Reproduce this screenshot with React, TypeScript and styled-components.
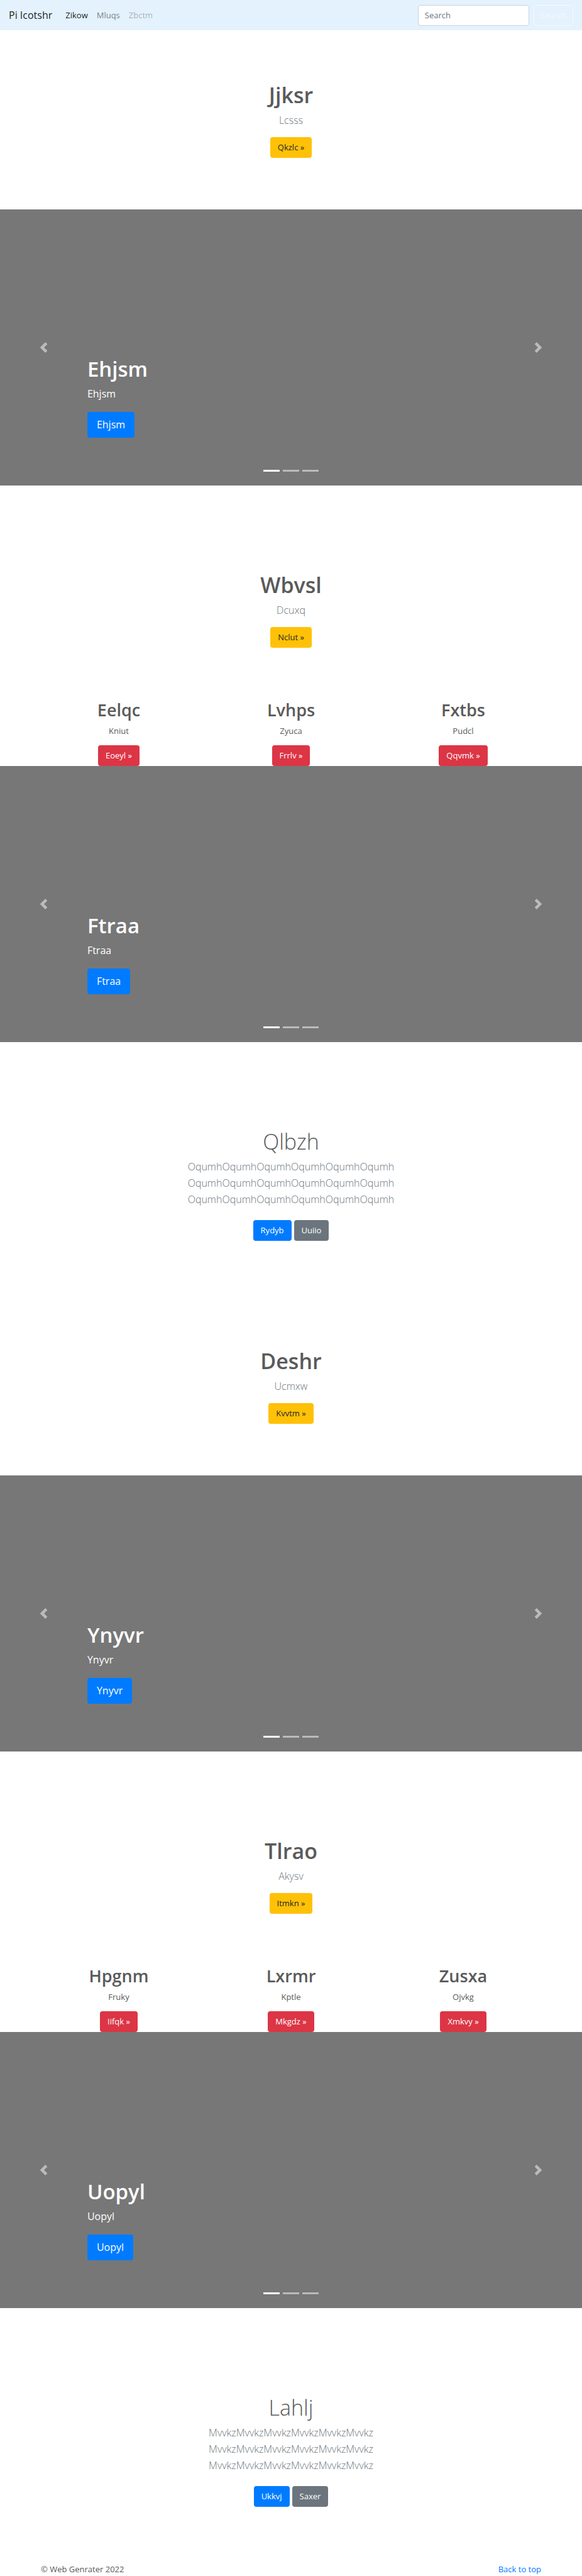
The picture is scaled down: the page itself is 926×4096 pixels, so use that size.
import React from 'react';
import styled, { createGlobalStyle } from 'styled-components';

const GlobalStyle = createGlobalStyle`
  *, *::before, *::after { box-sizing: border-box; }
  body {
    margin: 0;
    background: #fff;
    color: #5a5a5a;
    font-family: "Open Sans", "Noto Sans", sans-serif;
    font-size: 13px;
    line-height: 20px;
  }
  h1, h2, p, ul { margin: 0; padding: 0; }
  a { text-decoration: none; }
  button, input { font: inherit; }
`;

const Nav = styled.nav`
  display: flex;
  align-items: center;
  height: 48px;
  padding: 0 14px;
  background: #e3f2fd;
`;

const Brand = styled.a`
  margin-right: 14px;
  color: rgba(0, 0, 0, 0.9);
  font-size: 16px;
  line-height: 26px;
`;

const NavList = styled.ul`
  display: flex;
  flex: 1;
  list-style: none;
`;

const NavLink = styled.a<{ $alpha: number }>`
  display: block;
  padding: 0 7px;
  color: rgba(0, 0, 0, ${(p) => p.$alpha});
`;

const SearchForm = styled.form`
  display: flex;
  gap: 7px;
`;

const SearchInput = styled.input`
  width: 177px;
  height: 33px;
  padding: 0 10px;
  border: 1px solid #ced4da;
  border-radius: 4px;
  background: #fff;
  color: #495057;
  &::placeholder { color: #6c757d; opacity: 1; }
`;

const SearchButton = styled.button`
  height: 33px;
  padding: 0 10px;
  border: 1px solid #f8f9fa;
  border-radius: 4px;
  background: transparent;
  color: #f8f9fa;
`;

const tones = {
  warning: ['#ffc107', '#212529'],
  danger: ['#dc3545', '#fff'],
  primary: ['#007bff', '#fff'],
  secondary: ['#6c757d', '#fff'],
};

const ButtonLink = styled.a<{ $tone: keyof typeof tones; $large?: boolean }>`
  display: inline-block;
  height: ${(p) => (p.$large ? 41 : 33)}px;
  padding: 0 ${(p) => (p.$large ? 15 : 12)}px;
  border-radius: 4px;
  background: ${(p) => tones[p.$tone][0]};
  color: ${(p) => tones[p.$tone][1]};
  font-size: ${(p) => (p.$large ? 16 : 13)}px;
  line-height: ${(p) => (p.$large ? 41 : 33)}px;
`;

const Hero = styled.section`
  display: flex;
  flex-direction: column;
  align-items: center;
  padding: 82px 13px;
  text-align: center;
`;

const Title = styled.h1<{ $light?: boolean }>`
  margin-bottom: 5px;
  font-size: 34px;
  line-height: 43px;
  font-weight: ${(p) => (p.$light ? 300 : 600)};
`;

const SlideTitle = styled(Title)`
  font-size: 33px;
`;

const Lead = styled.p`
  margin-bottom: 14px;
  color: #6c757d;
  font-size: 16px;
  line-height: 26px;
  font-weight: 300;
`;

const Actions = styled.div`
  display: flex;
  gap: 4px;
  margin: 6px 0;
`;

const Columns = styled.section`
  display: grid;
  grid-template-columns: repeat(3, 1fr);
  max-width: 822px;
  margin: 0 auto;
`;

const Column = styled.div`
  display: flex;
  flex-direction: column;
  align-items: center;
  text-align: center;
`;

const ColumnTitle = styled.h2`
  margin-bottom: 7px;
  font-size: 27px;
  line-height: 33px;
  font-weight: 600;
`;

const ColumnText = styled.p`
  margin-bottom: 13px;
`;

const Slider = styled.section`
  position: relative;
  display: flex;
  flex-direction: column;
  justify-content: flex-end;
  height: 439px;
  margin-bottom: 55px;
  padding: 0 15% 76px;
  background: #777;
  color: #fff;
`;

const SlideText = styled.p`
  margin-bottom: 16px;
  font-size: 16px;
  line-height: 26px;
`;

const Arrow = styled.button<{ $side: 'left' | 'right' }>`
  position: absolute;
  top: 0;
  bottom: 0;
  ${(p) => p.$side}: 0;
  display: flex;
  align-items: center;
  justify-content: center;
  width: 15%;
  padding: 0;
  border: 0;
  background: none;
  opacity: 0.5;
`;

const Dots = styled.div`
  position: absolute;
  left: 0;
  right: 0;
  bottom: 22px;
  display: flex;
  justify-content: center;
  gap: 5px;
`;

const Dot = styled.button<{ $active: boolean }>`
  width: 26px;
  height: 3px;
  padding: 0;
  border: 0;
  background: #fff;
  opacity: ${(p) => (p.$active ? 1 : 0.5)};
`;

const Footer = styled.footer`
  display: flex;
  justify-content: space-between;
  max-width: 822px;
  margin: 0 auto;
  padding: 0 13px;
  line-height: 22px;
`;

const FooterLink = styled.a`
  color: #007bff;
`;

function Chevron({ d }: { d: string }) {
  return (
    <svg width="17" height="17" viewBox="0 0 8 8" fill="#fff" aria-hidden="true">
      <path d={d} />
    </svg>
  );
}

function Intro({ title, text, action }: { title: string; text: string; action: string }) {
  return (
    <Hero>
      <Title>{title}</Title>
      <Lead>{text}</Lead>
      <ButtonLink href="#" $tone="warning">{action} »</ButtonLink>
    </Hero>
  );
}

function Carousel({ label }: { label: string }) {
  return (
    <Slider>
      <SlideTitle>{label}</SlideTitle>
      <SlideText>{label}</SlideText>
      <div>
        <ButtonLink href="#" $tone="primary" $large>{label}</ButtonLink>
      </div>
      <Arrow type="button" aria-label="Previous" $side="left">
        <Chevron d="M5.25 0l-4 4 4 4 1.5-1.5L4.25 4l2.5-2.5L5.25 0z" />
      </Arrow>
      <Arrow type="button" aria-label="Next" $side="right">
        <Chevron d="M2.75 0l-1.5 1.5L3.75 4l-2.5 2.5L2.75 8l4-4-4-4z" />
      </Arrow>
      <Dots>
        {[0, 1, 2].map((i) => (
          <Dot key={i} type="button" aria-label={`Slide ${i + 1}`} $active={i === 0} />
        ))}
      </Dots>
    </Slider>
  );
}

function Features({ items }: { items: string[][] }) {
  return (
    <Columns>
      {items.map(([title, text, action]) => (
        <Column key={title}>
          <ColumnTitle>{title}</ColumnTitle>
          <ColumnText>{text}</ColumnText>
          <ButtonLink href="#" $tone="danger">{action} »</ButtonLink>
        </Column>
      ))}
    </Columns>
  );
}

function Album({ title, word, actions }: { title: string; word: string; actions: [string, string] }) {
  const line = word.repeat(6);
  return (
    <Hero>
      <Title $light>{title}</Title>
      <Lead>
        {line}<br />{line}<br />{line}
      </Lead>
      <Actions>
        <ButtonLink href="#" $tone="primary">{actions[0]}</ButtonLink>
        <ButtonLink href="#" $tone="secondary">{actions[1]}</ButtonLink>
      </Actions>
    </Hero>
  );
}

export default function App() {
  return (
    <>
      <GlobalStyle />
      <Nav>
        <Brand href="#">Pi Icotshr</Brand>
        <NavList>
          <li><NavLink href="#" $alpha={0.9}>Zikow</NavLink></li>
          <li><NavLink href="#" $alpha={0.5}>Mluqs</NavLink></li>
          <li><NavLink href="#" $alpha={0.3}>Zbctm</NavLink></li>
        </NavList>
        <SearchForm onSubmit={(e) => e.preventDefault()}>
          <SearchInput type="search" placeholder="Search" aria-label="Search" />
          <SearchButton type="submit">Search</SearchButton>
        </SearchForm>
      </Nav>
      <main>
        <Intro title="Jjksr" text="Lcsss" action="Qkzlc" />
        <Carousel label="Ehjsm" />
        <Intro title="Wbvsl" text="Dcuxq" action="Nclut" />
        <Features
          items={[
            ['Eelqc', 'Kniut', 'Eoeyl'],
            ['Lvhps', 'Zyuca', 'Frrlv'],
            ['Fxtbs', 'Pudcl', 'Qqvmk'],
          ]}
        />
        <Carousel label="Ftraa" />
        <Album title="Qlbzh" word="Oqumh" actions={['Rydyb', 'Uuiio']} />
        <Intro title="Deshr" text="Ucmxw" action="Kvvtm" />
        <Carousel label="Ynyvr" />
        <Intro title="Tlrao" text="Akysv" action="Itmkn" />
        <Features
          items={[
            ['Hpgnm', 'Fruky', 'Iifqk'],
            ['Lxrmr', 'Kptle', 'Mkgdz'],
            ['Zusxa', 'Ojvkg', 'Xmkvy'],
          ]}
        />
        <Carousel label="Uopyl" />
        <Album title="Lahlj" word="Mvvkz" actions={['Ukkvj', 'Saxer']} />
      </main>
      <Footer>
        <p>© Web Genrater 2022</p>
        <FooterLink href="#">Back to top</FooterLink>
      </Footer>
    </>
  );
}
